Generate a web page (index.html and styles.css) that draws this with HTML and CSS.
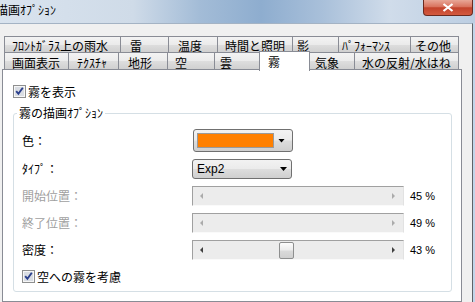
FILE: index.html
```html
<!DOCTYPE html>
<html lang="ja">
<head>
  <meta charset="utf-8">
  <title>描画ｵﾌﾟｼｮﾝ</title>
  <link rel="stylesheet" href="styles.css">
</head>
<body>
  <div class="titlebar">
    <span class="title">描画ｵﾌﾟｼｮﾝ</span>
    <button class="close">
      <svg width="12" height="9" viewBox="0 0 12 9"><path d="M1.5 1 L10.5 8 M10.5 1 L1.5 8" stroke="#fff" stroke-width="2.2"/></svg>
    </button>
  </div>

  <div class="client">
    <div class="tabs">
      <div class="tab-row row-back">
        <div class="tab">ﾌﾛﾝﾄｶﾞﾗｽ上の雨水</div>
        <div class="tab">雷</div>
        <div class="tab">温度</div>
        <div class="tab">時間と照明</div>
        <div class="tab">影</div>
        <div class="tab">ﾊﾟﾌｫｰﾏﾝｽ</div>
        <div class="tab">その他</div>
      </div>
      <div class="tab-row row-front">
        <div class="tab">画面表示</div>
        <div class="tab">ﾃｸｽﾁｬ</div>
        <div class="tab">地形</div>
        <div class="tab">空</div>
        <div class="tab">雲</div>
        <div class="tab active">霧</div>
        <div class="tab">気象</div>
        <div class="tab">水の反射/水はね</div>
      </div>
    </div>

    <div class="panel">
      <label class="check">
        <svg class="box" width="13" height="13" viewBox="0 0 13 13">
          <rect x="0.5" y="0.5" width="12" height="12" fill="#f6f6f6" stroke="#8e8f8f"/>
          <rect x="2" y="2" width="9" height="9" fill="#d9dde3"/>
          <path d="M3.2 6.2 L5.4 8.8 L9.8 2.8" fill="none" stroke="#2b3f8c" stroke-width="1.9"/>
        </svg>
        霧を表示
      </label>

      <fieldset class="group">
        <legend>霧の描画ｵﾌﾟｼｮﾝ</legend>

        <div class="field color-row">
          <span class="field-label">色：</span>
          <div class="combo color-combo">
            <span class="swatch"></span>
            <span class="arrow"></span>
          </div>
        </div>

        <div class="field">
          <span class="field-label">ﾀｲﾌﾟ：</span>
          <div class="combo type-combo">
            <span class="combo-text">Exp2</span>
            <span class="arrow"></span>
          </div>
        </div>

        <div class="field">
          <span class="field-label disabled">開始位置：</span>
          <div class="slider">
            <span class="arr-left"></span>
            <span class="arr-right"></span>
          </div>
          <span class="percent">45 %</span>
        </div>

        <div class="field">
          <span class="field-label disabled">終了位置：</span>
          <div class="slider">
            <span class="arr-left"></span>
            <span class="arr-right"></span>
          </div>
          <span class="percent">49 %</span>
        </div>

        <div class="field">
          <span class="field-label">密度：</span>
          <div class="slider enabled">
            <span class="arr-left"></span>
            <span class="thumb" style="left: 86px"></span>
            <span class="arr-right"></span>
          </div>
          <span class="percent">43 %</span>
        </div>

        <label class="check sky-check">
          <svg class="box" width="13" height="13" viewBox="0 0 13 13">
            <rect x="0.5" y="0.5" width="12" height="12" fill="#f6f6f6" stroke="#8e8f8f"/>
            <rect x="2" y="2" width="9" height="9" fill="#d9dde3"/>
            <path d="M3.2 6.2 L5.4 8.8 L9.8 2.8" fill="none" stroke="#2b3f8c" stroke-width="1.9"/>
          </svg>
          空への霧を考慮
        </label>
      </fieldset>
    </div>
  </div>
</body>
</html>
```

FILE: styles.css
```css
* {
  box-sizing: border-box;
}

body {
  margin: 0;
  width: 475px;
  height: 302px;
  overflow: hidden;
  display: flex;
  flex-direction: column;
  background: #c3d5e9;
  font-family: "Noto Sans CJK JP", sans-serif;
  font-size: 12px;
  color: #000;
}

/* window caption */
.titlebar {
  flex: none;
  height: 23px;
  display: flex;
  justify-content: space-between;
  align-items: flex-start;
  background: linear-gradient(90deg, #d9e3ee 0%, #cfdbe8 28%, #a3bcd7 42%, #8eadcf 55%, #a9c0da 68%, #d0dcea 82%, #bccee2 100%);
}

.title {
  margin-left: -4px;
  padding-top: 2px;
  line-height: 16px;
  white-space: nowrap;
}

.close {
  width: 50px;
  height: 16px;
  margin-right: 2px;
  padding: 0;
  display: flex;
  align-items: center;
  justify-content: center;
  border: 1px solid #6b2a1f;
  border-top: 0;
  border-radius: 0 0 4px 4px;
  background: linear-gradient(#e8a797, #d9735e 45%, #c3432c 52%, #d35a3f 100%);
}

.client {
  flex: 1;
  width: 473px;
  padding: 12px 0 0 2px;
  display: flex;
  flex-direction: column;
  background: #f0f0f0;
  border-top: 1px solid #a4b3c4;
  border-right: 1px solid #5f6368;
}

/* tabs */
.tabs {
  margin-left: 2px;
}

.tab-row {
  display: flex;
  align-items: flex-start;
}

.row-back {
  height: 16px;
}

.row-front {
  height: 17px;
}

.tab {
  flex: none;
  height: 16px;
  margin-right: -1px;
  padding: 2px 0 0 8px;
  line-height: 13px;
  white-space: nowrap;
  border: 1px solid #898c95;
  border-bottom: 0;
  background: linear-gradient(#f3f3f3, #ebebeb 50%, #dedede 51%, #d0d0d0);
}

.row-front .tab {
  height: 17px;
  padding-top: 3px;
}

.row-back .tab:nth-child(1) { width: 117px; padding-left: 7px; }
.row-back .tab:nth-child(2) { width: 49px; padding-left: 9px; }
.row-back .tab:nth-child(3) { width: 50px; padding-left: 9px; }
.row-back .tab:nth-child(4) { width: 76px; padding-left: 7px; }
.row-back .tab:nth-child(5) { width: 47px; padding-left: 4px; }
.row-back .tab:nth-child(6) { width: 73px; padding-left: 3px; }
.row-back .tab:nth-child(7) { width: 49px; padding-left: 4px; }

.row-front .tab:nth-child(1) { width: 65px; padding-left: 7px; }
.row-front .tab:nth-child(2) { width: 51px; padding-left: 8px; }
.row-front .tab:nth-child(3) { width: 50px; padding-left: 9px; }
.row-front .tab:nth-child(4) { width: 48px; padding-left: 7px; }
.row-front .tab:nth-child(5) { width: 47px; padding-left: 5px; }
.row-front .tab:nth-child(6) { width: 51px; padding-left: 8px; }
.row-front .tab:nth-child(7) { width: 46px; padding-left: 5px; }
.row-front .tab:nth-child(8) { width: 105px; padding-left: 7px; }

.row-front .tab.active {
  position: relative;
  z-index: 1;
  height: 20px;
  margin-top: -1px;
  margin-left: -1px;
  padding-top: 3px;
  background: #fff;
}

/* tab page */
.panel {
  flex: 1;
  width: 460px;
  padding: 15px 9px 0 10px;
  background: #fff;
  border: 1px solid #898c95;
}

.check {
  display: flex;
  align-items: center;
  gap: 2px;
  height: 13px;
  line-height: 14px;
  white-space: nowrap;
}

.box {
  flex: none;
}

.group {
  margin: 8px 0 0;
  min-width: 0;
  padding: 0 9px 8px 8px;
  border: 1px solid #d5dfe5;
  border-radius: 3px;
}

.group legend {
  margin-left: -5px;
  padding: 0 2px;
  line-height: 14px;
}

.field {
  display: flex;
  align-items: center;
  height: 20px;
  margin-top: 7px;
}

.color-row {
  height: 23px;
  margin-top: 9px;
}

.field-label {
  flex: none;
  width: 170px;
  line-height: 14px;
}

.disabled {
  color: #9f9f9f;
}

.combo {
  width: 100px;
  display: flex;
  align-items: center;
  justify-content: space-between;
  border: 1px solid #707070;
  border-radius: 3px;
  background: linear-gradient(#f2f2f2, #ebebeb 48%, #dddddd 52%, #cfcfcf);
}

.color-combo {
  height: 23px;
  margin-left: 1px;
  padding: 0 7px 0 3px;
}

.swatch {
  width: 77px;
  height: 15px;
  background: #ff8000;
  border: 1px solid #9a9a9a;
}

.type-combo {
  height: 20px;
  padding: 0 4px;
}

.combo-text {
  font-family: "Liberation Sans", sans-serif;
  font-size: 12px;
}

.arrow {
  width: 7px;
  height: 4px;
  background: #000;
  clip-path: polygon(0 0, 100% 0, 50% 100%);
}

.slider {
  position: relative;
  width: 212px;
  height: 20px;
  padding: 0 8px 0 7px;
  display: flex;
  align-items: center;
  justify-content: space-between;
  background: #ececec;
  border-top: 1px solid #a0a0a0;
  border-left: 1px solid #a0a0a0;
  border-right: 1px solid #e2e2e2;
  border-bottom: 1px solid #fafafa;
}

.arr-left,
.arr-right {
  width: 0;
  height: 0;
  border-style: solid;
  border-color: transparent;
}

.arr-left {
  border-width: 3px 3px 3px 0;
  border-right-color: #ababab;
}

.arr-right {
  border-width: 3px 0 3px 3px;
  border-left-color: #ababab;
}

.enabled .arr-left {
  border-right-color: #404040;
}

.enabled .arr-right {
  border-left-color: #404040;
}

.thumb {
  position: absolute;
  top: 1px;
  width: 15px;
  height: 17px;
  border: 1px solid #8e8f8f;
  border-radius: 2px;
  background: linear-gradient(#fdfdfd, #ececec 48%, #dadada 52%, #cfcfcf);
}

.percent {
  margin-left: 6px;
  font-family: "Liberation Sans", sans-serif;
  font-size: 11px;
  white-space: nowrap;
}

.sky-check {
  margin-top: 10px;
}
```
